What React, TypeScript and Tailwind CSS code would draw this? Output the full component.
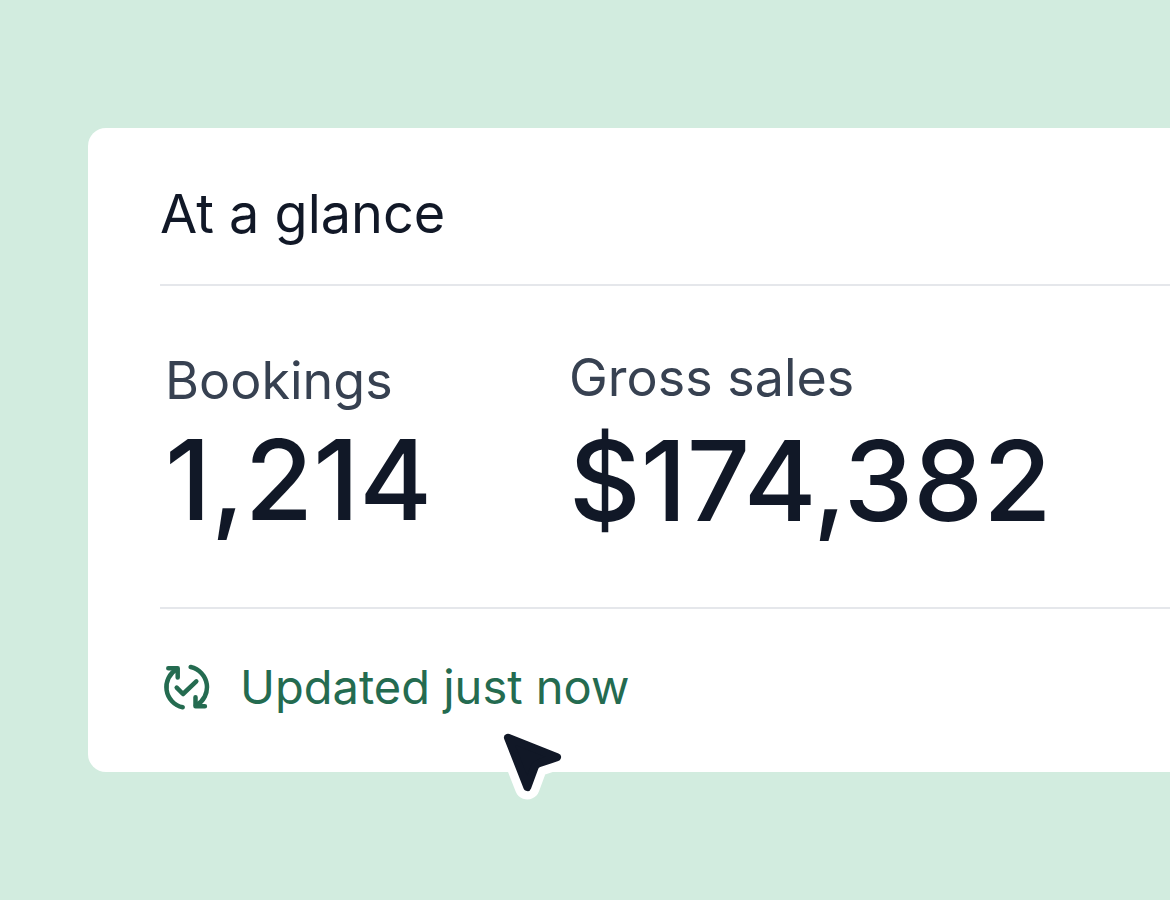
type StatProps = {
  label: string;
  value: string;
  className?: string;
};

function Stat({ label, value, className }: StatProps) {
  return (
    <div className={className}>
      <dt className="text-[52px] leading-[64px] text-[#374151]">{label}</dt>
      <dd className="text-[111px] leading-[112px] font-medium">{value}</dd>
    </div>
  );
}

function UpdatedIcon() {
  return (
    <svg
      className="size-12 shrink-0"
      viewBox="0 -1 48 48"
      fill="none"
      stroke="currentColor"
      strokeWidth="4.5"
      strokeLinecap="round"
      strokeLinejoin="round"
      aria-hidden="true"
    >
      <path d="M20.7 43.3A20.7 20.7 0 0 1 15 5" />
      <path d="M6.3 4.2h9.4v9.4" />
      <path d="M28.7 3A20.7 20.7 0 0 1 34 41.5" />
      <path d="M33.5 33.3v9h9.4" />
      <path d="M14.7 23.7l6.3 6.3 13.3-12.7" />
    </svg>
  );
}

function Cursor({ className }: { className?: string }) {
  const shape = "M18 17.7L67 37.3L49 43.3Q45.5 44.5 44.3 48L37.3 67Z";

  return (
    <svg
      className={className}
      viewBox="0 0 90 90"
      strokeLinejoin="round"
      aria-hidden="true"
    >
      <path d={shape} fill="#fff" stroke="#fff" strokeWidth="25" />
      <path d={shape} fill="#111827" stroke="#111827" strokeWidth="8" />
    </svg>
  );
}

export default function App() {
  return (
    <main className="min-h-screen overflow-hidden bg-[#d2ecdf] pt-32 pb-32 pl-[88px] font-['Inter','Liberation_Sans',sans-serif] text-[#111827]">
      <section className="relative rounded-l-[18px] bg-white pl-[72px]">
        <h2 className="border-b-2 border-gray-200 pt-[54px] pb-[38px] text-[54px] leading-[64px] font-normal">
          At a glance
        </h2>

        <dl className="flex items-start gap-[137px] pt-[60px] pb-[70px] whitespace-nowrap">
          <Stat label="Bookings" value="1,214" className="flex flex-col gap-[11px] pt-[3px] pl-[5px]" />
          <Stat label="Gross sales" value="$174,382" className="flex flex-col gap-[15px]" />
        </dl>

        <div className="flex items-center gap-[30px] border-t-2 border-gray-200 pt-[50px] pb-[57px] pl-0.5 text-[#246b50]">
          <UpdatedIcon />
          <p className="text-[47px] leading-[56px]">Updated just now</p>
        </div>

        {/* pointer hanging over the bottom edge of the card */}
        <Cursor className="absolute -bottom-[38px] left-[402px] size-[90px]" />
      </section>
    </main>
  );
}
